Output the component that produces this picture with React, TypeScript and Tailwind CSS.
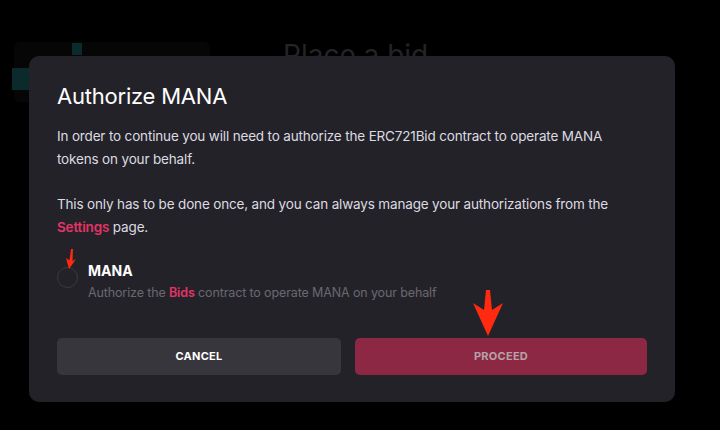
import React from "react";

export default function App() {
  return (
    <div
      className="relative w-[720px] h-[430px] overflow-hidden bg-black"
      style={{ fontFamily: "Inter, 'Noto Sans', sans-serif" }}
    >
      {/* faint background page */}
      <div className="absolute left-[14px] top-[42px] w-[196px] h-[60px] rounded-md bg-[#060607]" />
      <div className="absolute left-[72px] top-[43px] w-[10px] h-[12px] bg-[#0a2b2e]" />
      <div className="absolute left-[12px] top-[68px] w-[17px] h-[22px] bg-[#0a2a2c]" />
      <div className="absolute left-[283px] top-[38px] text-[28px] leading-[34px] text-[#242426]">
        Place a bid
      </div>

      {/* modal */}
      <div className="absolute left-[29px] top-[56px] w-[646px] h-[346px] rounded-[10px] bg-[#242229] px-[28px] pt-[24px] flex flex-col">
        <h1 className="text-[22px] leading-[32px] text-white font-normal tracking-[-0.01em]">
          Authorize MANA
        </h1>
        <p className="mt-[13px] text-[13.5px] leading-[23px] text-[#dcdbe0] tracking-[-0.012em]">
          In order to continue you will need to authorize the ERC721Bid contract to operate MANA
          <br />
          tokens on your behalf.
        </p>
        <p className="mt-[22px] text-[13.5px] leading-[23px] text-[#dcdbe0] tracking-[-0.012em]">
          This only has to be done once, and you can always manage your authorizations from the
          <br />
          <span className="text-[#e23566] font-semibold">Settings</span> page.
        </p>
        <div className="mt-[20px] flex items-start gap-[10px]">
          <div className="mt-[8px] w-[21px] h-[21px] rounded-full border-[1.5px] border-[#3b3a40] shrink-0" />
          <div className="flex flex-col">
            <div className="text-[14px] leading-[24px] font-bold text-white">MANA</div>
            <div className="text-[12.5px] leading-[20px] text-[#6a686f] tracking-[-0.01em]">
              Authorize the <span className="text-[#e23566] font-semibold">Bids</span> contract to
              operate MANA on your behalf
            </div>
          </div>
        </div>
        <div className="mt-[35px] grid grid-cols-[284px_292px] gap-[14px]">
          <button className="h-[37px] rounded-[5px] bg-[#37363d] text-[11px] font-bold tracking-wide text-white">
            CANCEL
          </button>
          <button className="h-[37px] rounded-[5px] bg-[#8c2843] text-[11px] font-bold tracking-wide text-[#b7a2a9]">
            PROCEED
          </button>
        </div>
      </div>

      {/* annotation arrows */}
      <svg className="absolute left-[60px] top-[248px]" width="20" height="24" viewBox="0 0 20 24">
        <path d="M11 1 L13 1 L12.5 13 L16 11 L9 21 L6 10 L9.5 12.5 Z" fill="#ff2a10" />
      </svg>
      <svg className="absolute left-[466px] top-[288px]" width="44" height="50" viewBox="0 0 44 50">
        <path d="M20 2 L24 2 L26 22 L37 15 L22 48 L7 15 L18 22 Z" fill="#ff2a10" />
      </svg>
    </div>
  );
}
